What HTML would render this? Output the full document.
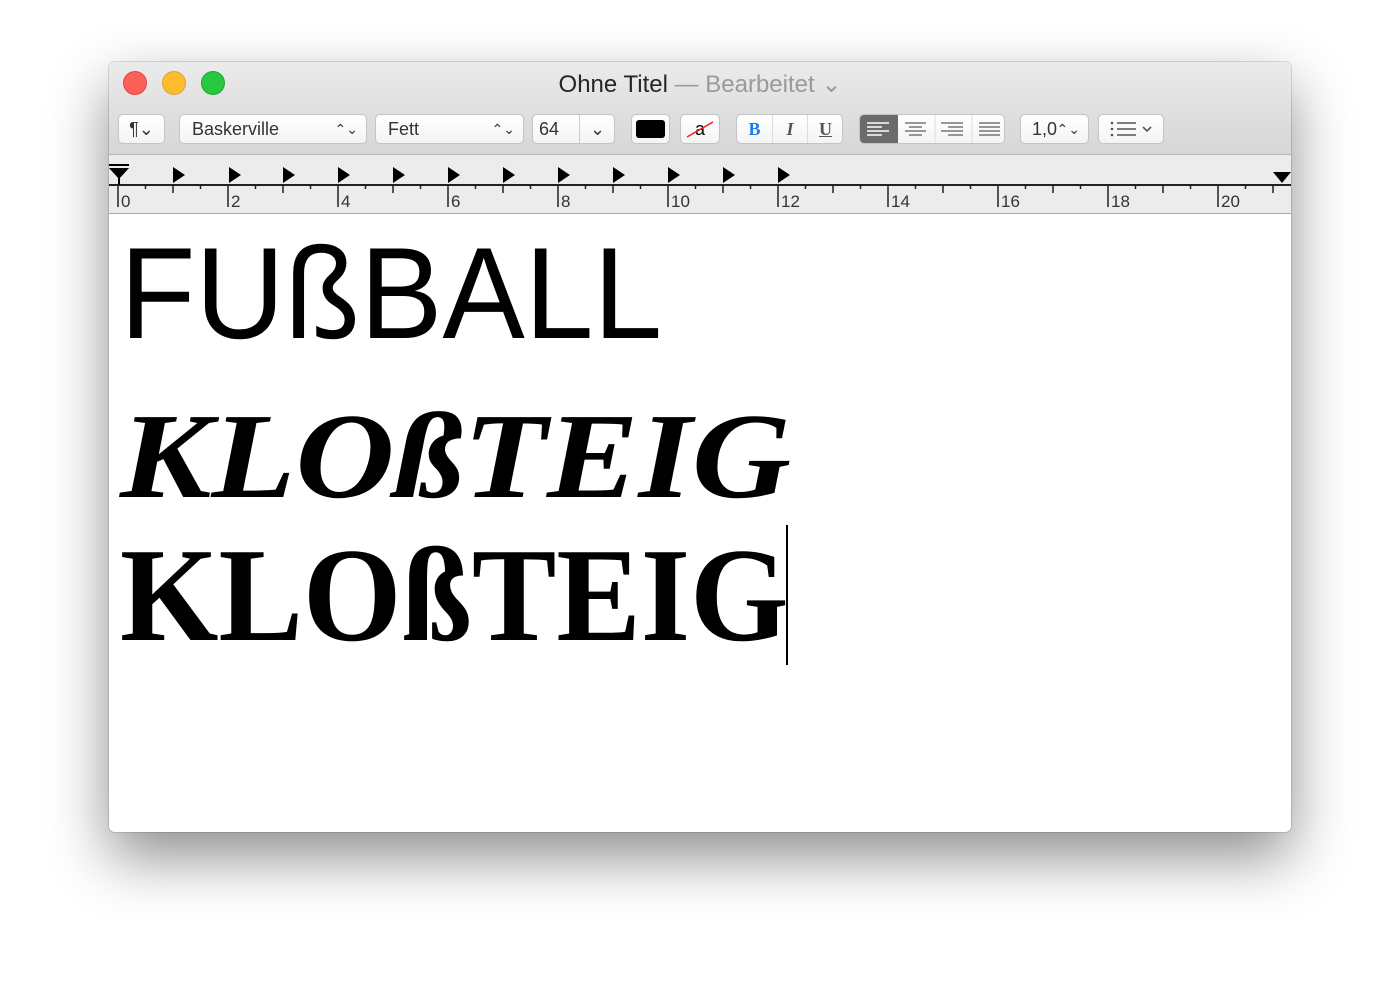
<!DOCTYPE html>
<html><head><meta charset="utf-8"><style>
*{margin:0;padding:0;box-sizing:border-box}
body{width:1400px;height:988px;background:#fff;position:relative;overflow:hidden;font-family:"Liberation Sans",sans-serif}
.win{position:absolute;left:109px;top:62px;width:1182px;height:770px;border-radius:6px;background:#fff;box-shadow:0 25px 60px rgba(0,0,0,.45),0 0 0 1px rgba(0,0,0,.12);overflow:hidden}
.top{position:absolute;left:0;top:0;width:1182px;height:93px;background:linear-gradient(#ebebeb,#d6d6d6);border-bottom:1px solid #b5b5b5}
.light{position:absolute;top:9px;width:24px;height:24px;border-radius:50%}
.title{position:absolute;left:0;width:1182px;top:8px;text-align:center;font-size:24px;color:#262626}
.title span{color:#9a9a9a}
.b{position:absolute;top:52px;height:30px;background:linear-gradient(#fff,#f4f4f4);border:1px solid #c4c4c4;border-radius:5px;font-size:18px;color:#333;line-height:28px}
.ruler{position:absolute;left:0;top:93px;width:1182px;height:59px;background:#ececec;border-bottom:1px solid #a8a8a8}
.t{position:absolute;white-space:nowrap;color:#000;transform-origin:0 0}
</style></head><body>
<div class="win">
<div class="top">
 <div class="light" style="left:14px;background:#fc5f57;border:1px solid #df4744"></div>
 <div class="light" style="left:53px;background:#fdbc2e;border:1px solid #dea236"></div>
 <div class="light" style="left:92px;background:#28c840;border:1px solid #1aab29"></div>
 <div class="title">Ohne Titel <span>— Bearbeitet ⌄</span></div>
 <div class="b" style="left:9px;width:47px;text-align:center">¶⌄</div>
 <div class="b" style="left:70px;width:188px;padding-left:12px">Baskerville<span style="position:absolute;right:8px;font-size:14px">⌃⌄</span></div>
 <div class="b" style="left:266px;width:149px;padding-left:12px">Fett<span style="position:absolute;right:8px;font-size:14px">⌃⌄</span></div>
 <div class="b" style="left:423px;width:83px;padding-left:6px">64<span style="position:absolute;left:46px;top:0;height:28px;border-left:1px solid #ccc;width:36px;text-align:center">⌄</span></div>
 <div class="b" style="left:522px;width:39px"><div style="position:absolute;left:4px;top:5px;width:29px;height:18px;background:#000;border-radius:3px"></div></div>
 <div class="b" style="left:571px;width:40px;text-align:center;color:#000">a<svg style="position:absolute;left:4px;top:5px" width="30" height="18"><line x1="2" y1="17" x2="28" y2="2" stroke="#e22" stroke-width="1.5"/></svg></div>
 <div class="b" style="left:627px;width:107px;font-family:'Liberation Serif',serif;font-weight:bold">
  <span style="position:absolute;left:0;width:35px;text-align:center;color:#1a7cf5">B</span>
  <span style="position:absolute;left:35px;width:35px;text-align:center;font-style:italic;color:#555;border-left:1px solid #ddd">I</span>
  <span style="position:absolute;left:70px;width:36px;text-align:center;text-decoration:underline;color:#555;border-left:1px solid #ddd">U</span></div>
 <div class="b" style="left:750px;width:146px;overflow:hidden">
  <div style="position:absolute;left:0;top:0;width:38px;height:28px;background:#6b6b6b"></div>
  <svg width="146" height="28" style="position:absolute;left:0;top:0">
   <g stroke="#fff" stroke-width="1.5"><line x1="7" y1="8" x2="29" y2="8"/><line x1="7" y1="12" x2="22" y2="12"/><line x1="7" y1="16" x2="29" y2="16"/><line x1="7" y1="20" x2="22" y2="20"/></g>
   <g stroke="#777" stroke-width="1.5"><line x1="45" y1="8" x2="66" y2="8"/><line x1="49" y1="12" x2="62" y2="12"/><line x1="45" y1="16" x2="66" y2="16"/><line x1="49" y1="20" x2="62" y2="20"/>
   <line x1="81" y1="8" x2="103" y2="8"/><line x1="88" y1="12" x2="103" y2="12"/><line x1="81" y1="16" x2="103" y2="16"/><line x1="88" y1="20" x2="103" y2="20"/>
   <line x1="119" y1="8" x2="140" y2="8"/><line x1="119" y1="12" x2="140" y2="12"/><line x1="119" y1="16" x2="140" y2="16"/><line x1="119" y1="20" x2="140" y2="20"/></g>
   <g stroke="#ddd"><line x1="75" y1="0" x2="75" y2="28"/><line x1="112" y1="0" x2="112" y2="28"/></g></svg></div>
 <div class="b" style="left:911px;width:69px;padding-left:11px">1,0<span style="position:absolute;right:8px;font-size:14px">⌃⌄</span></div>
 <div class="b" style="left:989px;width:66px"><svg width="66" height="28" style="position:absolute;left:0;top:0"><g stroke="#555" stroke-width="1.6"><line x1="18" y1="8" x2="37" y2="8"/><line x1="18" y1="14" x2="37" y2="14"/><line x1="18" y1="20" x2="37" y2="20"/></g><g fill="#555"><circle cx="13" cy="8" r="1.3"/><circle cx="13" cy="14" r="1.3"/><circle cx="13" cy="20" r="1.3"/></g><path d="M44 12 l4 4 l4 -4" stroke="#555" stroke-width="1.6" fill="none"/></svg></div>
</div>
<div class="ruler">
<svg width="1182" height="59" style="position:absolute;left:0;top:0" font-family="Liberation Sans" font-size="17" fill="#333">
 <line x1="0" y1="30" x2="1182" y2="30" stroke="#222" stroke-width="2"/>
 <path stroke="#222" stroke-width="1.5" fill="none" d="
 M9 30v22M119 30v22M229 30v22M339 30v22M449 30v22M559 30v22M669 30v22M779 30v22M889 30v22M999 30v22M1109 30v22
 M64 30v8M174 30v8M284 30v8M394 30v8M504 30v8M614 30v8M724 30v8M834 30v8M944 30v8M1054 30v8M1164 30v8
 M36.5 30v4M91.5 30v4M146.5 30v4M201.5 30v4M256.5 30v4M311.5 30v4M366.5 30v4M421.5 30v4M476.5 30v4M531.5 30v4M586.5 30v4M641.5 30v4M696.5 30v4M751.5 30v4M806.5 30v4M861.5 30v4M916.5 30v4M971.5 30v4M1026.5 30v4M1081.5 30v4M1136.5 30v4"/>
 <text x="12" y="52">0</text><text x="122" y="52">2</text><text x="232" y="52">4</text><text x="342" y="52">6</text><text x="452" y="52">8</text><text x="562" y="52">10</text><text x="672" y="52">12</text><text x="782" y="52">14</text><text x="892" y="52">16</text><text x="1002" y="52">18</text><text x="1112" y="52">20</text>
 <path fill="#000" d="M64 12l12 8l-12 8zM120 12l12 8l-12 8zM174 12l12 8l-12 8zM229 12l12 8l-12 8zM284 12l12 8l-12 8zM339 12l12 8l-12 8zM394 12l12 8l-12 8zM449 12l12 8l-12 8zM504 12l12 8l-12 8zM559 12l12 8l-12 8zM614 12l12 8l-12 8zM669 12l12 8l-12 8z"/>
 <path d="M0 9 h20 v2 h-20z M0 13 h20 l-10 11z" fill="#000"/>
 <line x1="10" y1="20" x2="10" y2="30" stroke="#000" stroke-width="2"/>
 <path d="M1164 17 h18 l-9 11z" fill="#000"/>
</svg>
</div>
<div class="t" style="left:11px;top:166px;font-size:130px;line-height:130px;transform:scaleX(.95)">FUßBALL</div>
<div class="t" style="left:11px;top:334px;font-family:'Liberation Serif',serif;font-weight:bold;font-style:italic;font-size:122px;line-height:122px;transform:scaleX(1.125)">KLOßTEIG</div>
<div class="t" style="left:11px;top:466px;font-family:'Liberation Serif',serif;font-weight:bold;font-size:134px;line-height:134px;transform:scaleX(.945)">KLOßTEIG</div>
<div style="position:absolute;left:677px;top:463px;width:2px;height:140px;background:#000"></div>
</div>
</body></html>
